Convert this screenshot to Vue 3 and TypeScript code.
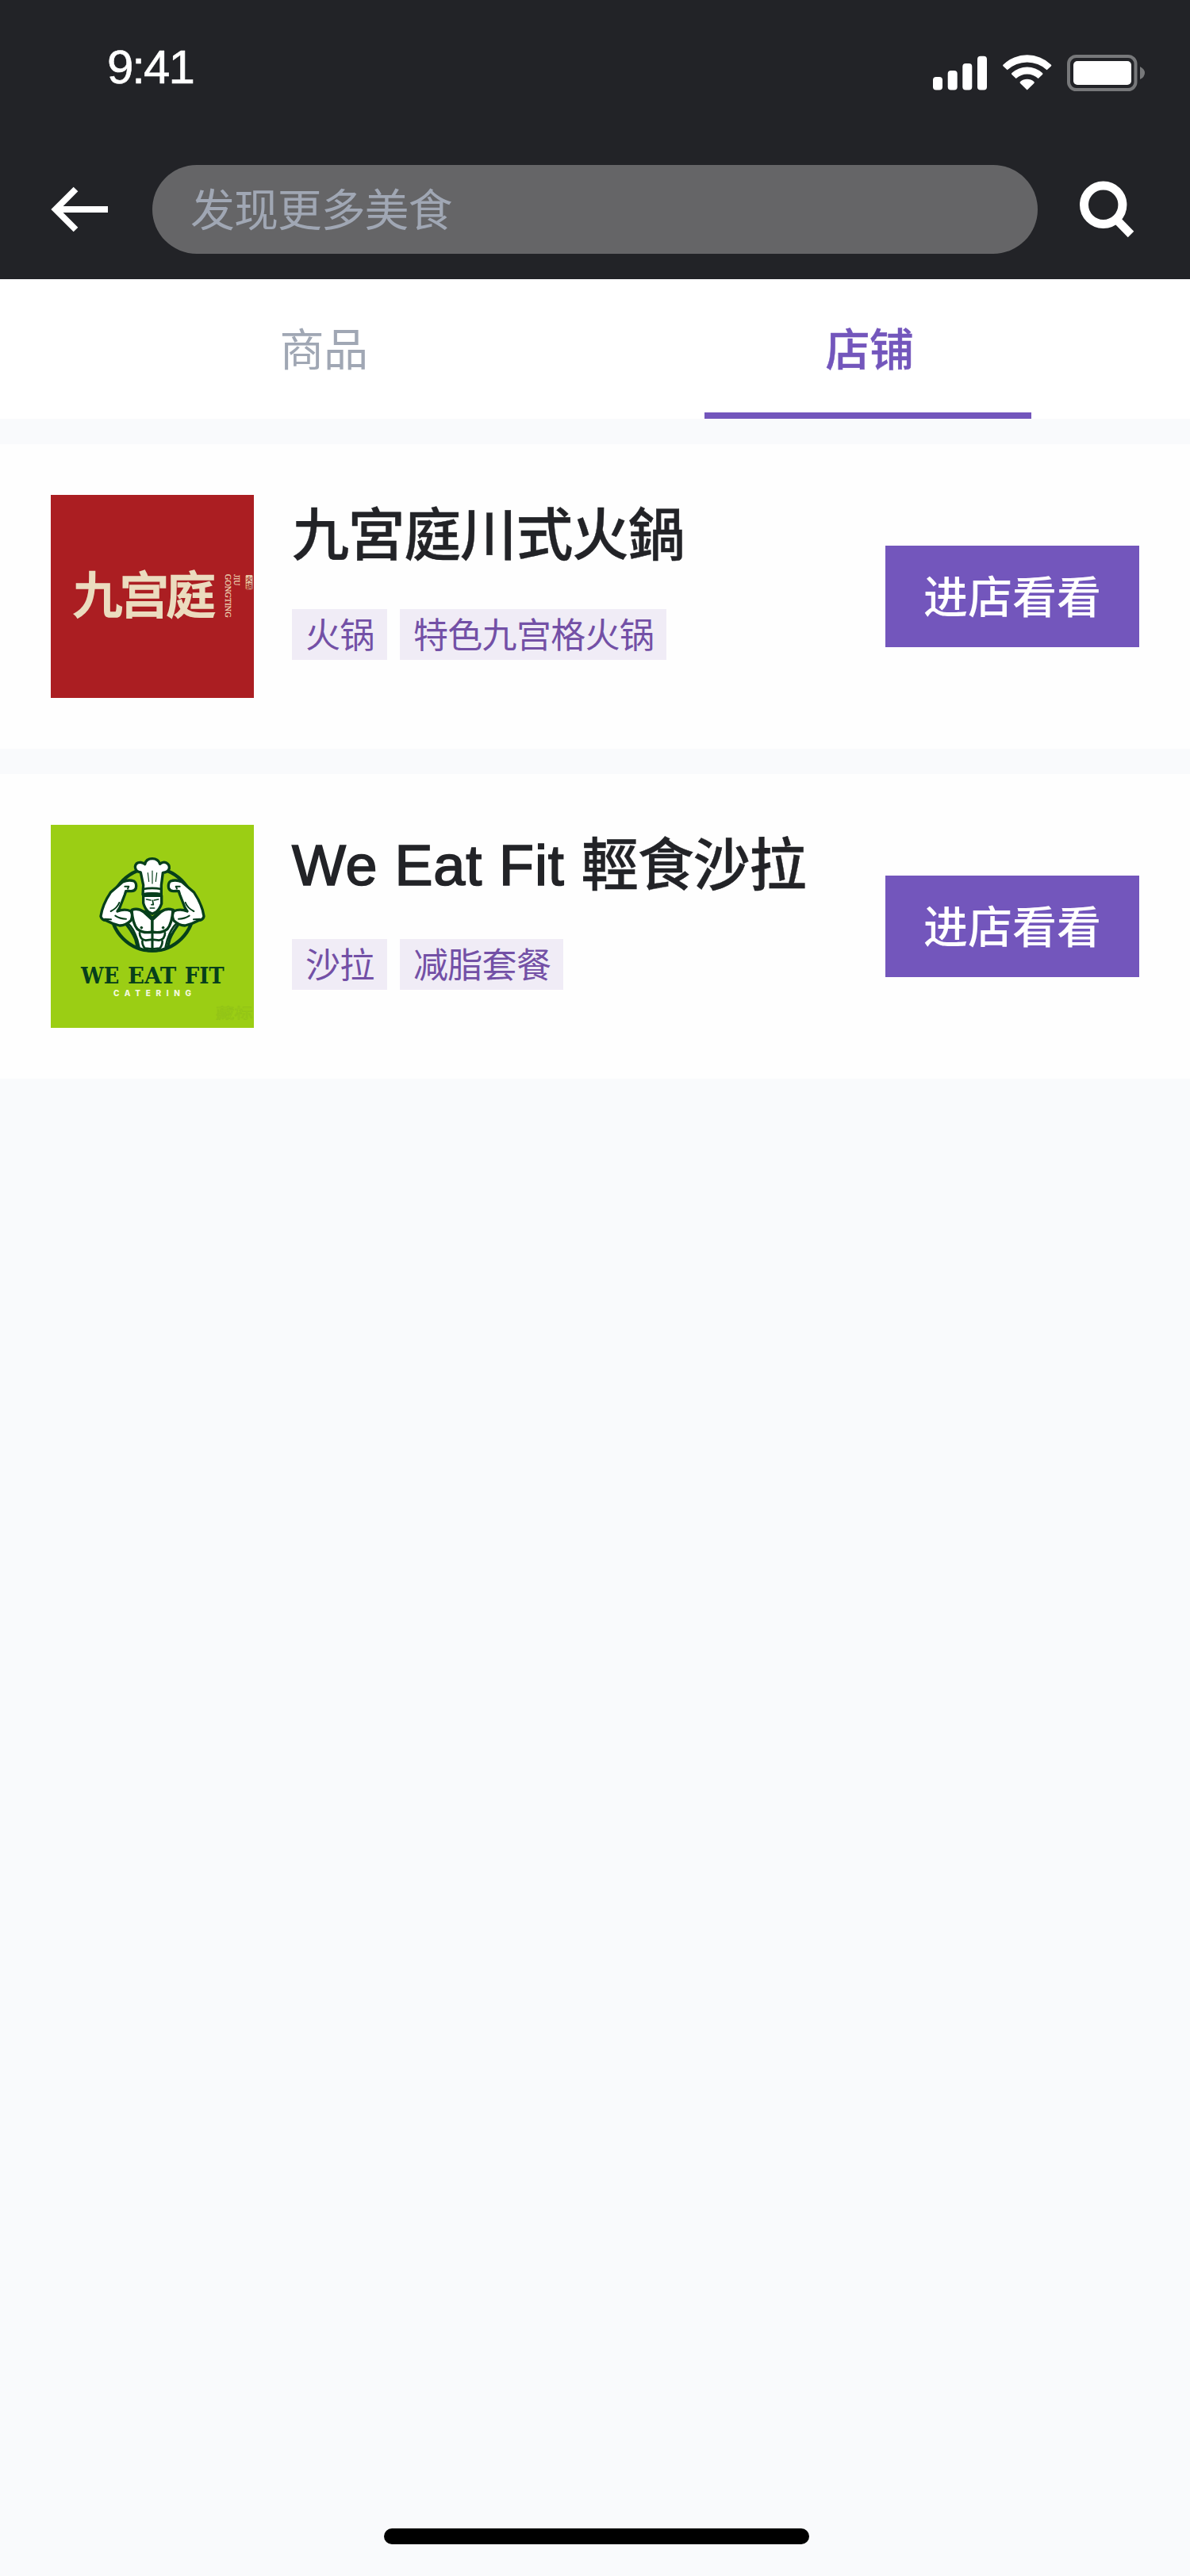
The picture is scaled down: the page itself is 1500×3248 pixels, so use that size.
<script setup lang="ts">
import { ref } from 'vue'

interface Shop {
  id: string
  latin?: string
  name: string
  tags: string[]
}

const tabs = ['商品', '店铺']
const activeTab = ref(1)

const shops: Shop[] = [
  { id: 'jgt', name: '九宮庭川式火鍋', tags: ['火锅', '特色九宫格火锅'] },
  { id: 'fit', latin: 'We Eat Fit ', name: '輕食沙拉', tags: ['沙拉', '减脂套餐'] },
]
</script>

<template>
  <div class="screen">
    <header class="top">
      <div class="status">
        <span class="time">9:41</span>
        <svg class="indicators" width="268" height="48" viewBox="1176 68 268 48" fill="#fff">
          <rect x="1176" y="97" width="12" height="16.5" rx="4" />
          <rect x="1194.7" y="89" width="12" height="24.5" rx="4" />
          <rect x="1213.3" y="80" width="12" height="33.5" rx="4" />
          <rect x="1232" y="70.7" width="12" height="42.8" rx="4" />
          <path d="M1264.6 81.4A43.6 43.6 0 0 1 1324.8 81.4Q1325.8 82.4 1324.8 83.4L1319.6 88.2A36.5 36.5 0 0 0 1269.8 88.2L1264.6 83.4Q1263.6 82.4 1264.6 81.4Z" />
          <path d="M1275.4 92A28.5 28.5 0 0 1 1314 92Q1315 93 1314 94L1308.7 99A20.5 20.5 0 0 0 1280.7 99L1275.4 94Q1274.4 93 1275.4 92Z" />
          <path d="M1286 103A13.5 13.5 0 0 1 1303.4 103Q1304.4 104 1303.4 105L1294.7 113.5L1286 105Q1285 104 1286 103Z" />
          <rect x="1347" y="71" width="84.5" height="42" rx="9.5" fill="none" stroke="#77787a" stroke-width="4" />
          <rect x="1353" y="77" width="73" height="30" rx="5" />
          <path d="M1437 84Q1443 87 1443 92T1437 100Z" fill="#77787a" />
        </svg>
      </div>
      <div class="nav">
        <svg width="72" height="58" viewBox="0 0 72 58" fill="none" stroke="#fff" stroke-width="8">
          <path d="M5 29H72M31.5 3.5L6 29L31.5 54.5" />
        </svg>
        <div class="search">发现更多美食</div>
        <svg class="glass" width="70" height="72" viewBox="1360 227 70 72" fill="none" stroke="#fff">
          <circle cx="1390.7" cy="257.3" r="24.2" stroke-width="11" />
          <path d="M1408 276.5L1425.5 294.5" stroke-width="10.5" />
        </svg>
      </div>
    </header>

    <nav class="tabs">
      <div
        v-for="(tab, i) in tabs"
        :key="tab"
        class="tab"
        :class="{ active: i === activeTab }"
        @click="activeTab = i"
      >{{ tab }}</div>
    </nav>

    <main class="list">
      <article v-for="shop in shops" :key="shop.id" class="card">
        <svg v-if="shop.id === 'jgt'" class="logo" viewBox="42 42 768 768">
          <rect x="42" y="42" width="768" height="768" fill="#ab1e22" />
          <g class="cjk" fill="#ebdcbf" stroke="#ebdcbf" stroke-width="5" font-weight="500" font-size="188">
            <text x="125" y="488" textLength="541" lengthAdjust="spacing">九宫庭</text>
          </g>
          <g class="serif" fill="#ebd3b2" stroke="#ebd3b2" stroke-width="0.8">
            <text transform="translate(702 341) rotate(90)" font-size="32" textLength="165" lengthAdjust="spacingAndGlyphs">GONGTING</text>
            <text transform="translate(734 343) rotate(90)" font-size="34" textLength="42" lengthAdjust="spacingAndGlyphs">JIU</text>
          </g>
          <rect x="779" y="345" width="26" height="55" rx="4" fill="#e6c4a4" />
          <g class="cjk" fill="#a5261f" font-size="24" font-weight="700">
            <text x="780" y="369">火</text>
            <text x="780" y="395">鍋</text>
          </g>
        </svg>

        <svg v-else class="logo" viewBox="42 30 768 768">
          <rect x="42" y="30" width="768" height="768" fill="#9bce14" />
          <g stroke="#063f1b" stroke-linejoin="round" stroke-linecap="round">
            <circle cx="426" cy="350" r="156" fill="none" stroke-width="13" />
            <!-- torso -->
            <path d="M322 400L350 352L398 358L426 384L456 358L505 352L530 400Q505 432 492 462L484 494Q426 520 370 494L362 462Q348 430 322 400Z" fill="#fff" stroke-width="10" />
            <!-- arms -->
            <g v-for="side in [0, 1]" :key="side" :transform="side ? 'translate(852 0) scale(-1 1)' : undefined">
              <path d="M314 246Q336 236 357 243Q368 251 364 270Q358 284 338 280L326 281L322 294L302 345L294 357Q320 346 344 356Q355 372 345 392Q322 412 302 411Q276 405 252 392Q234 390 231 376Q237 332 268 286Z" fill="#fff" stroke-width="10" />
              <path d="M322 263L337 263L333 272M301 324Q293 345 269 357M246 386L270 388M286 374Q304 386 327 386" fill="none" stroke-width="6" />
              <!-- pectoral -->
              <path d="M348 352Q372 343 394 360L426 389V435Q392 442 369 424Q352 404 348 352Z" fill="#fff" stroke-width="10" />
              <circle cx="385" cy="419" r="4" fill="#063f1b" stroke-width="3" />
              <!-- abdomen -->
              <path d="M378 439Q378 464 401 467L426 464V441M388 470Q388 486 398 497L426 500V467M334 403Q355 422 369 464L376 492M358 442L368 462" fill="none" stroke-width="8" />
            </g>
            <!-- head -->
            <path d="M392 298H461V328Q453 350 440 360L426 367L411 359Q397 346 392 326Z" fill="#fff" stroke-width="10" />
            <path d="M404 312L420 315M433 315L449 312M427 316L430 332H423M418 345H434M411 365L426 379L443 365" fill="none" stroke-width="5" />
            <!-- hat -->
            <path d="M390 294L392 258L382 210Q362 207 361 189Q363 171 382 172Q393 174 398 179Q402 158 426 158Q448 158 455 178Q466 168 478 173Q492 180 490 195Q485 210 466 211L460 258V294Q426 287 390 294Z" fill="#fff" stroke-width="10" />
            <path d="M391 273Q426 266 460 273M391 292Q426 286 460 292" fill="none" stroke-width="8" />
            <path d="M409 212L413 244M426 204V252M443 212L439 244" fill="none" stroke-width="3.5" />
          </g>
          <g class="slab" fill="#063f1b" font-size="86" font-weight="700">
            <text x="156" y="629" textLength="145" lengthAdjust="spacingAndGlyphs">WE</text>
            <text x="333" y="629" textLength="184" lengthAdjust="spacingAndGlyphs">EAT</text>
            <text x="548" y="629" textLength="150" lengthAdjust="spacingAndGlyphs">FIT</text>
          </g>
          <text class="inter" x="279" y="679" font-size="30" font-weight="800" letter-spacing="20" fill="#f4fadd">CATERING</text>
          <text class="cjk" x="666" y="763" font-size="56" textLength="140" lengthAdjust="spacingAndGlyphs" fill="none" stroke="#86b51c" stroke-width="2" opacity="0.45">藏标</text>
        </svg>

        <div class="info">
          <h2 class="name"><span v-if="shop.latin" class="latin">{{ shop.latin }}</span>{{ shop.name }}</h2>
          <div class="tags">
            <span v-for="tag in shop.tags" :key="tag" class="tag">{{ tag }}</span>
          </div>
        </div>
        <button class="enter">进店看看</button>
      </article>
    </main>

    <footer class="home"><i class="home-bar"></i></footer>
  </div>
</template>

<style>
body {
  background: #f9fafc;
}
</style>

<style scoped>
.screen {
  display: flex;
  flex-direction: column;
  width: 1500px;
  height: 3248px;
  overflow: hidden;
  background: #f9fafc;
  font-family: "Liberation Sans", "Noto Sans CJK SC", sans-serif;
}
.top {
  height: 352px;
  background: #222327;
}
.status {
  display: flex;
  justify-content: space-between;
  align-items: flex-start;
  height: 208px;
  padding: 0 56px 0 135px;
  box-sizing: border-box;
}
.time {
  margin-top: 51px;
  font-size: 60px;
  line-height: 68px;
  letter-spacing: -2px;
  color: #fff;
  -webkit-text-stroke: 0.6px #fff;
}
.indicators {
  margin-top: 68px;
}
.nav {
  display: flex;
  align-items: center;
  height: 112px;
  padding: 0 70px 0 64px;
}
.search {
  flex: 1;
  height: 112px;
  margin: 0 52px 0 56px;
  padding-left: 48px;
  box-sizing: border-box;
  border-radius: 56px;
  background: #656567;
  color: #a0a7b4;
  font-size: 56px;
  line-height: 115px;
  letter-spacing: -1.1px;
}
.tabs {
  display: flex;
  justify-content: space-between;
  height: 176px;
  padding: 0 200px;
  box-sizing: border-box;
  background: #fff;
}
.tab {
  width: 412px;
  padding-left: 4px;
  box-sizing: border-box;
  border-bottom: 8px solid transparent;
  text-align: center;
  font-size: 56px;
  line-height: 179px;
  letter-spacing: -0.6px;
  color: #a0a7b4;
}
.tab.active {
  border-color: #7356bc;
  color: #7356bc;
  font-weight: 500;
  -webkit-text-stroke: 0.5px #7356bc;
}
.list {
  display: flex;
  flex-direction: column;
  gap: 32px;
  margin-top: 32px;
}
.card {
  display: flex;
  align-items: center;
  height: 384px;
  padding: 0 64px;
  box-sizing: border-box;
  background: #fefefe;
}
.logo {
  flex: none;
  width: 256px;
  height: 256px;
}
.cjk {
  font-family: "Noto Sans CJK SC", sans-serif;
}
.serif {
  font-family: "Liberation Serif", serif;
}
.slab {
  font-family: "DejaVu Serif", serif;
}
.inter {
  font-family: Inter, sans-serif;
}
.info {
  flex: 1;
  height: 256px;
  margin-left: 48px;
}
.name {
  height: 100px;
  margin: 0;
  font-family: "Liberation Sans", "Noto Sans CJK TC", sans-serif;
  font-size: 72px;
  font-weight: 500;
  line-height: 103px;
  letter-spacing: -1.4px;
  color: #222327;
  white-space: nowrap;
  -webkit-text-stroke: 0.4px #222327;
}
.latin {
  letter-spacing: 0.9px;
  white-space: pre;
  -webkit-text-stroke: 1.7px #222327;
}
.tags {
  display: flex;
  gap: 16px;
  margin-top: 44px;
}
.tag {
  min-width: 120px;
  height: 64px;
  padding: 0 16px 0 17px;
  box-sizing: border-box;
  background: #f0ecf6;
  color: #7350a6;
  font-size: 44px;
  line-height: 67px;
  letter-spacing: -0.7px;
  white-space: nowrap;
}
.enter {
  width: 320px;
  height: 128px;
  padding: 0 0 7px;
  border: 0;
  background: #7356bc;
  color: #fff;
  font: 500 56px/121px "Noto Sans CJK SC", sans-serif;
}
.home {
  display: flex;
  justify-content: center;
  margin-top: auto;
  padding: 0 0 40px 4px;
}
.home-bar {
  width: 536px;
  height: 20px;
  border-radius: 10px;
  background: #000;
}
</style>
